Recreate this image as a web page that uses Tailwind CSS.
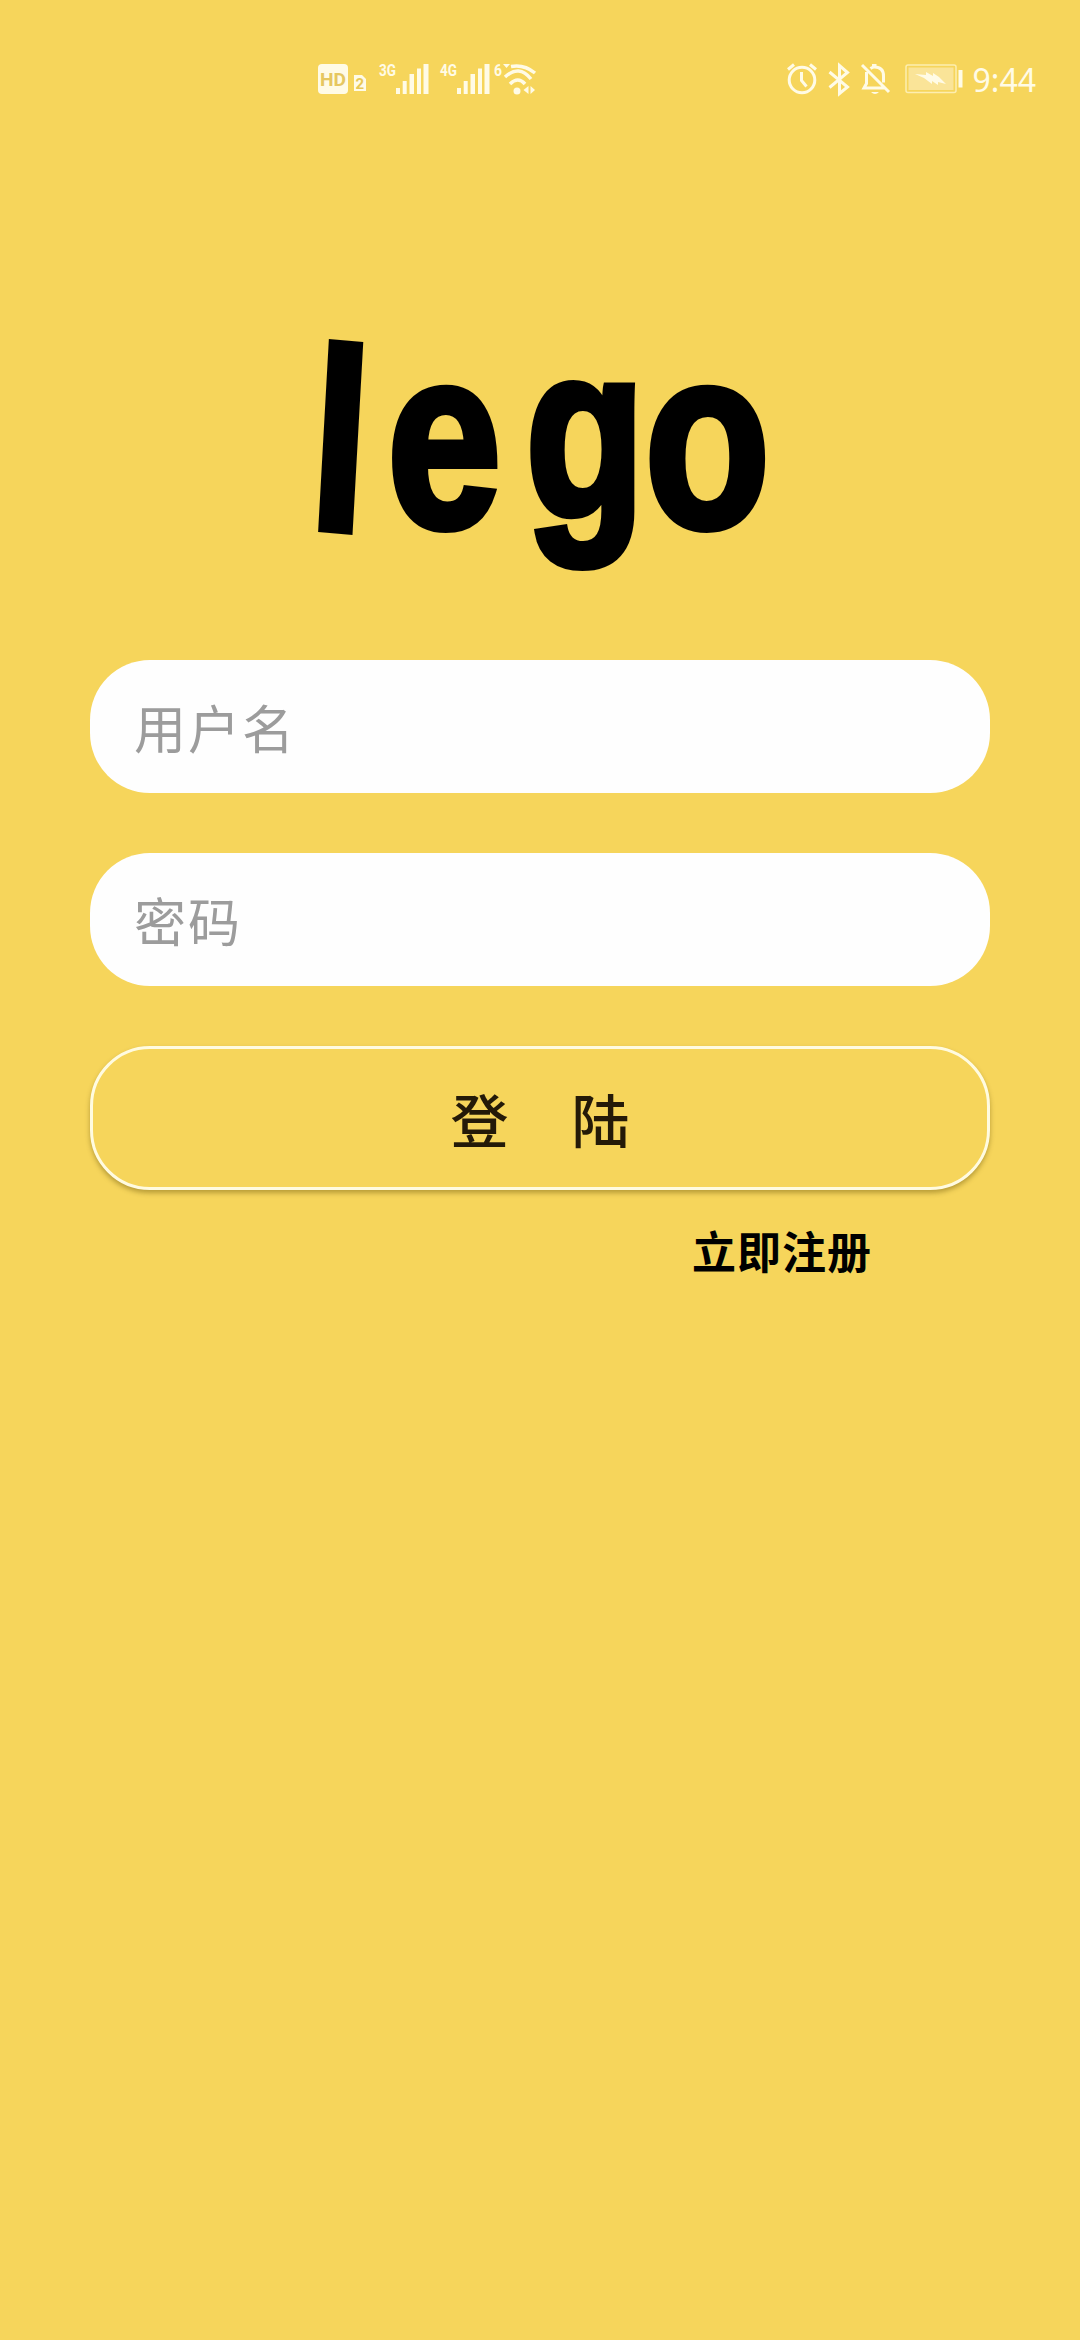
<!DOCTYPE html>
<html lang="zh-CN">
<head>
    <meta charset="UTF-8">
    <meta name="viewport" content="width=device-width, initial-scale=1.0">
    <title>lego</title>
    <script src="https://cdn.jsdelivr.net/npm/@tailwindcss/browser@4"></script>
</head>
<body class="bg-[#f6d55b] min-h-screen font-['Noto_Sans_CJK_SC',sans-serif]">
    <!-- Status bar -->
    <header class="h-[156px] pt-[60px] pl-[318px] pr-[44px] flex items-start justify-between text-[#fffbe6]">
        <div class="flex items-start">
            <svg class="w-[50px] h-[38px]" viewBox="0 0 50 38" fill="currentColor">
                <rect y="4" width="30" height="30" rx="4"/>
                <text x="2" y="26" font-family="Roboto" font-weight="700" font-size="19" textLength="26" lengthAdjust="spacingAndGlyphs" fill="#e6c760">HD</text>
                <path d="M36 15h8l4 4v12h-12z"/>
                <text x="37.5" y="29" font-family="Roboto" font-weight="700" font-size="15" fill="#e8c855">2</text>
            </svg>
            <svg class="w-[61px] h-[38px] ml-[10px]" viewBox="0 0 61 38" fill="currentColor">
                <text x="1" y="16" font-family="Roboto" font-weight="700" font-size="17" textLength="17" lengthAdjust="spacingAndGlyphs">3G</text>
                <path d="M18 28h4v6h-4zM24.700 21h4v13h-4zM31.500 14h4.500v20h-4.500zM39 8.500h4v25.500h-4zM45.500 4h5v30h-5z"/>
            </svg>
            <svg class="w-[55px] h-[38px]" viewBox="0 0 55 38" fill="currentColor">
                <text x="1" y="16" font-family="Roboto" font-weight="700" font-size="17" textLength="17" lengthAdjust="spacingAndGlyphs">4G</text>
                <path d="M18 28h4v6h-4zM24.700 21h4v13h-4zM31.500 14h4.500v20h-4.500zM39 8.500h4v25.500h-4zM45.500 4h5v30h-5z"/>
            </svg>
            <svg class="w-[44px] h-[38px]" viewBox="0 0 44 38" fill="none" stroke="currentColor" stroke-width="3.500">
                <text x="0" y="16" font-family="Roboto" font-weight="700" font-size="17" textLength="8" lengthAdjust="spacingAndGlyphs" fill="currentColor" stroke="none">6</text>
                <path d="M9 4h7l-3.500 4z" fill="currentColor" stroke="none"/>
                <path d="M17 6.500Q30 4 41 13M11 17Q25 4 37 19M16 24Q24 16 31 24"/>
                <circle cx="23" cy="31" r="3.500" fill="currentColor" stroke="none"/>
                <path d="M34.500 26v8l-5-4zM36.500 26v8l4.500-4z" fill="currentColor" stroke="none"/>
            </svg>
        </div>
        <div class="flex items-start">
            <svg class="w-[32px] h-[38px]" viewBox="0 0 32 38" fill="none" stroke="currentColor" stroke-width="3">
                <circle cx="16" cy="20" r="12.800"/>
                <path d="M15.500 12v8.500l5 6M2 9.500l6-5M30 9.500l-6-5"/>
            </svg>
            <svg class="w-[22px] h-[38px] ml-[10px]" viewBox="0 0 22 38" fill="none" stroke="currentColor" stroke-width="3">
                <path d="M1.500 12l18 15-8 6.500V5.500l8 7-18 15"/>
            </svg>
            <svg class="w-[32px] h-[38px] ml-[10px]" viewBox="0 0 32 38" fill="none" stroke="currentColor" stroke-width="3">
                <path d="M2 5l27 27M6.500 12v11.500L4 28h20.500M10.500 8.500q2-1.500 4-1.500 9 0 9 9v6.500M12 5.500h4.500"/>
                <path d="M11 32h8q-4 4-8 0z" fill="currentColor" stroke="none"/>
            </svg>
            <svg class="w-[62px] h-[38px] ml-[13px]" viewBox="0 0 62 38" fill="none" stroke="currentColor">
                <rect x="1" y="5" width="50" height="27.500" rx="2" stroke-width="1.500" stroke="#fdeeb0"/>
                <rect x="3.500" y="7.500" width="45" height="22.500" fill="#fae498" stroke="none"/>
                <path d="M10 14l11 1v-3l7 4v-3l6 4 7 7-8-2v3l-6-4v3l-8-6z" fill="currentColor" stroke="none"/>
                <path d="M55.500 10v17.500" stroke-width="4"/>
            </svg>
            <span class="ml-[6px] text-[32px] leading-[39px] font-['Noto_Sans',sans-serif]">9:44</span>
        </div>
    </header>

    <main class="px-[90px] pt-[174px] flex flex-col">
        <!-- Logo -->
        <svg class="w-[460px] h-[250px] self-center overflow-visible" viewBox="310 330 460 250" role="img" aria-label="lego">
            <text transform="scale(.8 1)" x="384 484 657 806" y="527 527 515 527" rotate="4 0 0 0" font-family="Liberation Sans" font-weight="700" font-size="256" stroke="#000" stroke-width="8">le<tspan font-size="244">g</tspan>o</text>
        </svg>

        <form class="mt-[80px] flex flex-col">
            <input type="text" placeholder="用户名" class="h-[133px] px-[44px] rounded-[60px] bg-[#fefefe] text-[52px] tracking-[2px] placeholder:text-[#9c9c9c] outline-none">
            <input type="password" placeholder="密码" class="mt-[60px] h-[133px] px-[44px] rounded-[60px] bg-[#fefefe] text-[52px] tracking-[2px] placeholder:text-[#9c9c9c] outline-none">
            <button type="submit" class="mt-[60px] h-[144px] rounded-[60px] border-[3px] border-[#fffbe0] bg-[#f6d55b] shadow-[0_3px_5px_rgba(90,70,0,0.4)] flex items-center justify-center gap-[63px] text-[58px] font-medium text-[#241a08]">
                <span>登</span><span>陆</span>
            </button>
        </form>
        <a href="#" class="mt-[30px] mr-[118px] self-end text-[44px] leading-[60px] tracking-[1px] font-bold text-black">立即注册</a>
    </main>
</body>
</html>
